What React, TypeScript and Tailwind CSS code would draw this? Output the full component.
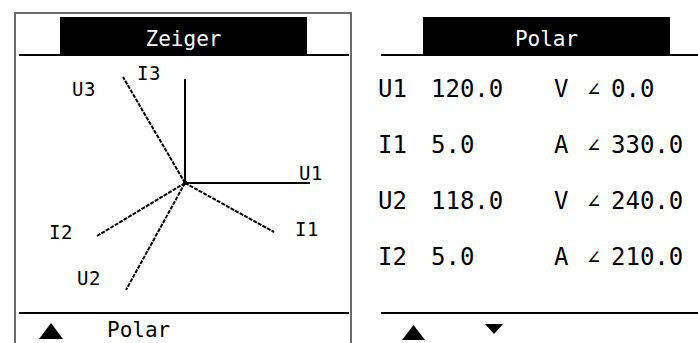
const MONO = "font-['DejaVu_Sans_Mono',monospace]";

const rows = [
  { label: "U1", value: "120.0", unit: "V", angle: "0.0" },
  { label: "I1", value: "5.0", unit: "A", angle: "330.0" },
  { label: "U2", value: "118.0", unit: "V", angle: "240.0" },
  { label: "I2", value: "5.0", unit: "A", angle: "210.0" },
];

function TriUp({ w, h }: { w: number; h: number }) {
  return (
    <svg width={w} height={h} viewBox={`0 0 ${w} ${h}`} className="block">
      <polygon points={`${w / 2},0 ${w},${h} 0,${h}`} fill="#000" />
    </svg>
  );
}

function TriDown({ w, h }: { w: number; h: number }) {
  return (
    <svg width={w} height={h} viewBox={`0 0 ${w} ${h}`} className="block">
      <polygon points={`0,0 ${w},0 ${w / 2},${h}`} fill="#000" />
    </svg>
  );
}

function Phasors() {
  // centre of the diagram
  const cx = 169;
  const cy = 127;
  const labels = [
    { t: "U3", x: 56, y: 40 },
    { t: "I3", x: 121, y: 24 },
    { t: "U1", x: 283, y: 124 },
    { t: "I1", x: 279, y: 180 },
    { t: "I2", x: 33, y: 183 },
    { t: "U2", x: 61, y: 229 },
  ];
  return (
    <svg width={334} height={256} viewBox="0 0 334 256" className="block">
      <g stroke="#000" strokeWidth={2} shapeRendering="crispEdges">
        <line x1={cx} y1={cy} x2={cx} y2={23} />
        <line x1={cx} y1={cy} x2={294} y2={cy} />
      </g>
      <g stroke="#000" strokeWidth={2} strokeDasharray="4 1.2">
        <line x1={cx} y1={cy} x2={107} y2={21} />
        <line x1={cx} y1={cy} x2={258} y2={176} />
        <line x1={cx} y1={cy} x2={81} y2={180} />
        <line x1={cx} y1={cy} x2={110} y2={234} />
      </g>
      <rect x={cx - 2} y={cy - 2} width={4} height={4} fill="#000" />
      {labels.map((l) => (
        <text
          key={l.t}
          x={l.x}
          y={l.y}
          fontFamily="DejaVu Sans Mono, monospace"
          fontSize={19}
          letterSpacing={0.5}
          fill="#000"
        >
          {l.t}
        </text>
      ))}
    </svg>
  );
}

export default function App() {
  return (
    <div className={`w-[698px] h-[343px] overflow-hidden bg-white text-black flex items-start ${MONO}`}>
      {/* Zeiger screen */}
      <div className="mt-[12px] ml-[14px] w-[338px] h-[331px] border-l-2 border-t-2 border-r-2 border-[#6b6b6b] flex flex-col">
        <div className="pt-[3px]">
          <div className="ml-[3px] mr-[1px] border-b-2 border-black pl-[41px]">
            <div className="w-[247px] h-[37px] bg-black text-white text-center text-[21px] leading-none pt-[12px]">
              Zeiger
            </div>
          </div>
        </div>
        <Phasors />
        <div className="ml-[3px] mr-[1px] border-t-2 border-black flex items-start pl-[20px]">
          <div className="mt-[9px]">
            <TriUp w={24} h={16} />
          </div>
          <div className="ml-[44px] mt-[6px] text-[21px] leading-none">Polar</div>
        </div>
      </div>

      {/* Polar screen */}
      <div className="flex-1 mt-[17px] flex flex-col">
        <div className="ml-[29px] border-b-2 border-black pl-[42px]">
          <div className="w-[247px] h-[37px] bg-black text-white text-center text-[21px] leading-none pt-[12px]">
            Polar
          </div>
        </div>
        <div className="h-[256px] pt-[19px] pl-[26px]">
          {rows.map((r) => (
            <div key={r.label} className="h-[56px] flex items-baseline text-[24px] leading-[28px]">
              <span className="w-[53px]">{r.label}</span>
              <span className="w-[123px]">{r.value}</span>
              <span className="w-[33px]">{r.unit}</span>
              <span className="w-[24px] text-[22px]">∠</span>
              <span>{r.angle}</span>
            </div>
          ))}
        </div>
        <div className="ml-[29px] border-t-2 border-black flex items-start pl-[21px]">
          <div className="mt-[11px]">
            <TriUp w={23} h={15} />
          </div>
          <div className="ml-[60px] mt-[10px]">
            <TriDown w={18} h={10} />
          </div>
        </div>
      </div>
    </div>
  );
}
